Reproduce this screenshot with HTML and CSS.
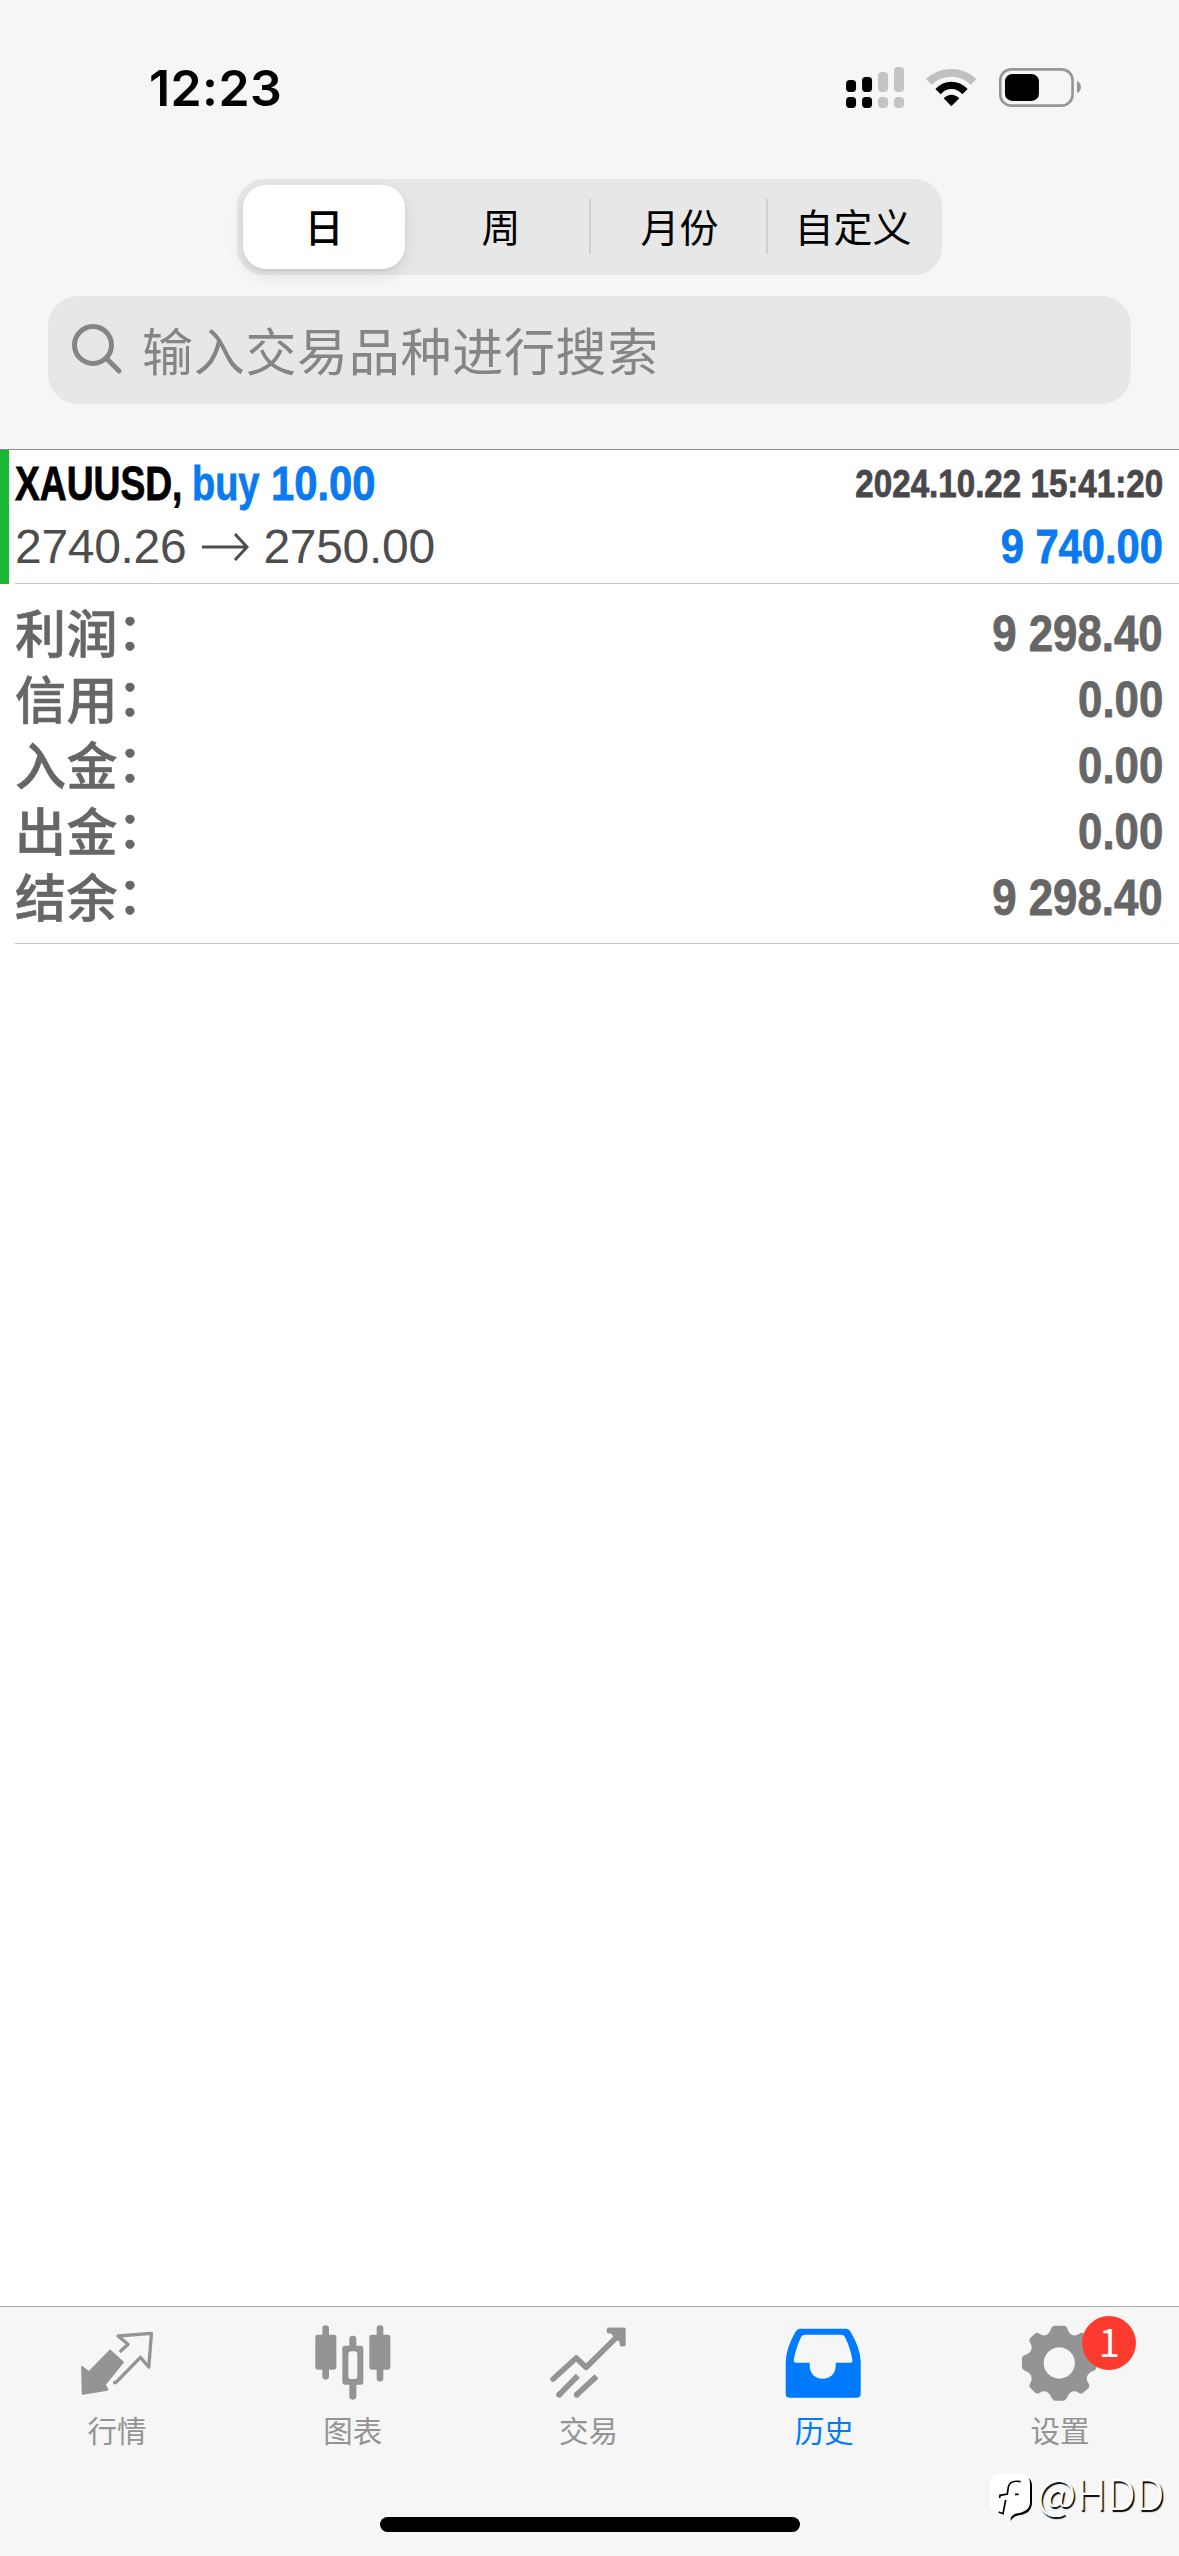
FILE: index.html
```html
<!DOCTYPE html>
<html lang="zh-CN">
<head>
<meta charset="utf-8">
<title>历史</title>
<link rel="stylesheet" href="styles.css">
</head>
<body>
<div class="app">
  <header class="header">
    <div class="status">
      <span class="clock">12:23</span>
      <svg class="status-icons" viewBox="60 60 760 160" aria-hidden="true">
        <g fill="#000"><rect x="78" y="120" width="30" height="36" rx="11"/><rect x="126" y="111" width="30" height="45" rx="11"/><rect x="78" y="171" width="30" height="33" rx="11"/><rect x="126" y="171" width="30" height="33" rx="11"/></g>
        <g fill="#c4c4c4"><rect x="174" y="96" width="30" height="60" rx="11"/><rect x="222" y="81" width="30" height="75" rx="11"/><rect x="174" y="171" width="30" height="33" rx="11"/><rect x="222" y="171" width="30" height="33" rx="11"/></g>
        <path fill="#c0c0c0" d="M318 117Q350 87 394 87Q438 87 469 117L453 134Q427 110 394 110Q361 110 335 134Z"/>
        <path d="M346 147Q367 125 394 125Q422 125 443 147L427 163Q413 147 394 147Q376 147 362 163Z"/>
        <path d="M371 175Q382 164 394 164Q407 164 418 175L394 199Z"/>
        <rect x="541" y="88" width="217" height="109" rx="33" fill="none" stroke="#969696" stroke-width="8"/>
        <rect x="555" y="102" width="102" height="81" rx="22"/>
        <path fill="#969696" d="M771 123Q783 129 783 141Q783 154 771 160Z"/>
      </svg>
    </div>
    <div class="segments">
      <span class="segment selected">日</span>
      <span class="segment">周</span>
      <span class="segment divided">月份</span>
      <span class="segment divided">自定义</span>
    </div>
    <div class="search">
      <svg class="search-icon" viewBox="0 0 52 52" aria-hidden="true"><circle cx="21" cy="21" r="18.5"/><path d="M34.5 34.5L47 47"/></svg>
      <span>输入交易品种进行搜索</span>
    </div>
  </header>
  <main class="content">
    <section class="deal">
      <div class="deal-row">
        <div class="deal-title"><span class="condensed symbol">XAUUSD,</span><span class="condensed side blue">buy</span><span class="condensed volume blue">10.00</span></div>
        <span class="condensed right deal-time">2024.10.22 15:41:20</span>
      </div>
      <div class="deal-row">
        <span class="price">2740.26<svg class="arrow" viewBox="0 0 48 30" aria-hidden="true"><path d="M1 15H45M34 2L46 15L34 28"/></svg>2750.00</span>
        <span class="condensed right deal-profit blue">9 740.00</span>
      </div>
    </section>
    <section class="summary">
      <div class="sum-row"><span>利润<i class="colon">：</i></span><span class="condensed right amount">9 298.40</span></div>
      <div class="sum-row"><span>信用<i class="colon">：</i></span><span class="condensed right amount">0.00</span></div>
      <div class="sum-row"><span>入金<i class="colon">：</i></span><span class="condensed right amount">0.00</span></div>
      <div class="sum-row"><span>出金<i class="colon">：</i></span><span class="condensed right amount">0.00</span></div>
      <div class="sum-row"><span>结余<i class="colon">：</i></span><span class="condensed right amount">9 298.40</span></div>
    </section>
  </main>
  <nav class="tabs">
    <div class="tab">
      <svg class="tab-icon" viewBox="113.7 100 240 240" aria-hidden="true">
        <path fill="currentColor" stroke="currentColor" stroke-width="6" stroke-linejoin="round" d="M210 183L248 218L194 285L202 300L128 312L126 232L146 248Z"/>
        <path fill="none" stroke="currentColor" stroke-width="10" stroke-linejoin="round" d="M239 187L264 164L234 139L334 131L326 232L301 203L227 279H219"/>
      </svg>
      <span>行情</span>
    </div>
    <div class="tab">
      <svg class="tab-icon" viewBox="821 100 240 240" aria-hidden="true">
        <g fill="currentColor"><rect x="846" y="107" width="20" height="163" rx="10"/><rect x="825" y="135" width="63" height="105" rx="7"/><rect x="1009" y="107" width="20" height="169" rx="10"/><rect x="987" y="135" width="63" height="105" rx="7"/><rect x="927" y="138" width="21" height="40" rx="10"/><rect x="927" y="275" width="21" height="55" rx="10"/><path fill-rule="evenodd" d="M913 168H962Q969 168 969 175V278Q969 285 962 285H913Q906 285 906 278V175Q906 168 913 168ZM933 185Q924 185 924 195V258Q924 268 933 268H942Q951 268 951 258V195Q951 185 942 185Z"/></g>
      </svg>
      <span>图表</span>
    </div>
    <div class="tab">
      <svg class="tab-icon" viewBox="148.5 100 240 240" aria-hidden="true">
        <g fill="none" stroke="currentColor" stroke-width="17" stroke-linejoin="round"><path stroke-linecap="round" d="M161 268L230 205L260 233L368 126M330 123H369V162"/><path d="M235 258L179 315M291 260L232 315"/></g>
        <g fill="currentColor"><path d="M322 114H378V170L345 145Z"/><circle cx="179" cy="315" r="9"/><circle cx="232" cy="315" r="9"/></g>
      </svg>
      <span>交易</span>
    </div>
    <div class="tab active">
      <svg class="tab-icon" viewBox="855.9 100 240 240" aria-hidden="true">
        <path fill="currentColor" fill-rule="evenodd" d="M902 117H1038Q1048 117 1053 127Q1083 178 1083 218V312Q1083 324 1071 324H870Q858 324 858 312V218Q858 178 887 127Q893 117 902 117ZM916 135Q907 135 903 144Q887 180 882 211Q882 219 888 219H930V228C930 253 948 267 969 267S1008 253 1008 228V219H1053Q1059 219 1058 211Q1054 181 1037 144Q1033 135 1024 135Z"/>
      </svg>
      <span>历史</span>
    </div>
    <div class="tab">
      <svg class="tab-icon" viewBox="183.3 100 240 240" aria-hidden="true">
        <path fill="currentColor" fill-rule="evenodd" d="M283 108H313Q319 108 322 116Q327 132 337 136Q347 140 358 132Q367 127 373 132L385 145Q391 151 385 160Q378 171 382 181Q386 191 401 196Q410 200 410 207V233Q410 240 401 243Q386 248 382 259Q378 270 386 281Q391 289 386 295L370 309Q364 314 356 309Q345 302 335 306Q327 310 321 324Q317 333 311 333H285Q279 333 275 324Q269 310 261 306Q251 302 240 309Q232 314 226 309L211 294Q206 289 211 281Q218 270 214 259Q210 248 195 243Q186 240 186 233V207Q186 200 195 196Q210 191 214 181Q218 171 211 160Q206 151 211 145L225 132Q231 127 238 132Q249 140 259 136Q269 132 274 116Q277 108 283 108ZM298 173a47 47 0 1 0 0.1 0Z"/>
      </svg>
      <span>设置</span>
      <b class="badge">1</b>
    </div>
  </nav>
  <div class="home-area"><div class="home-bar"></div></div>
  <div class="watermark">
    <svg class="mark" viewBox="88 540 132 150" aria-hidden="true">
      <path fill="#000" d="M202 556Q217 562 217 582V630Q217 665 178 670Q160 673 153 687V660Z"/>
      <path fill="#fff" d="M119 545H184Q211 548 211 575V630Q211 658 174 664Q160 666 152 678L150 660L126 669L92 650V575Q92 547 119 545Z"/>
      <path fill="none" stroke="#000" stroke-width="5" d="M183 569Q151 563 146 585L143 606L121 610L120 618M138 624L130 665L117 660M166 607H177"/>
    </svg>
    <span>@HDD</span>
  </div>
</div>
</body>
</html>
```
FILE: styles.css
```css
* { box-sizing: border-box; }
body { margin: 0; background: #fff; font-family: "Liberation Sans", "Noto Sans CJK SC", sans-serif; }
.app { position: relative; width: 1179px; height: 2556px; display: flex; flex-direction: column; background: #fff; overflow: hidden; }
.header { height: 450px; background: #f6f6f6; border-bottom: 1px solid #8c8c8e; display: flex; flex-direction: column; }
.status { height: 179px; padding: 59px 85.5px 0 149px; display: flex; justify-content: space-between; align-items: flex-start; }
.clock { font: 600 50px/58px Inter, sans-serif; letter-spacing: .4px; }
.status-icons { width: 253.3px; height: 53.3px; margin-top: 1px; }
.segments { width: 705px; height: 96px; margin-left: 237px; padding: 6px; border-radius: 27px; background: #e7e7e7; display: grid; grid-template-columns: 162px 184px 177px 170px; }
.segment { display: flex; align-items: center; justify-content: center; padding: 0 0 4px 4px; font: 400 39px/50px "Noto Sans CJK SC", sans-serif; }
.segment:nth-child(2) { padding-left: 8px; }
.segment.selected { padding-left: 0; background: #fff; border-radius: 23px; font-weight: 500; box-shadow: 0 6px 16px rgba(0, 0, 0, .1), 0 2px 3px rgba(0, 0, 0, .05); }
.segment.divided { background: linear-gradient(#cfcfcf, #cfcfcf) 0 14px / 2px 55px no-repeat; }
.search { width: 1083px; height: 108px; margin: 21px 0 0 48px; padding: 0 24px; border-radius: 30px; background: #e7e7e8; display: flex; align-items: center; gap: 18px; color: #858587; font: 400 51px/70px "Noto Sans CJK SC", sans-serif; letter-spacing: .7px; }
.search span { padding-bottom: 3px; }
.search-icon { width: 52px; height: 52px; fill: none; stroke: #858587; stroke-width: 5; stroke-linecap: round; }
.content { flex: 1; }
.deal { height: 134px; border-left: 9px solid #18b835; padding: 2px 16px 0 6px; background: linear-gradient(#c6c6c8, #c6c6c8) 6px bottom / 100% 1px no-repeat; }
.deal-row { display: flex; justify-content: space-between; height: 63px; align-items: center; }
/* Narrow bold face, made by squeezing the regular-width one */
.condensed { display: inline-block; font-family: "Liberation Sans", sans-serif; font-weight: 700; white-space: pre; transform: scaleX(.85); transform-origin: 0 50%; -webkit-text-stroke: .8px currentColor; }
.condensed.right { transform-origin: 100% 50%; }
.blue { color: #097aef; }
.deal-title { font-size: 48px; display: grid; grid-template-columns: 177px 79px 140px; }
.symbol { transform: scaleX(.775); }
.side { transform: scaleX(.79); }
.volume { transform: scaleX(.87); }
.deal-time { font-size: 39px; color: #48484a; }
.deal-profit { font-size: 48px; transform: scaleX(.868); }
.price { font-size: 48px; color: #4d4d4d; display: flex; align-items: center; letter-spacing: -.3px; }
.arrow { width: 48px; height: 30px; margin: 0 14px 0 15px; fill: none; stroke: #4d4d4d; stroke-width: 3; }
.summary { margin-left: 15px; height: 360px; padding: 17px 16px 0 0; border-bottom: 1px solid #c6c6c8; color: #666; }
.sum-row { height: 66px; display: flex; align-items: center; justify-content: space-between; font: 500 51px/60px "Noto Sans CJK SC", sans-serif; letter-spacing: .6px; }
.sum-row > span:first-child { padding-bottom: 6px; -webkit-text-stroke: .6px currentColor; }
.colon { display: inline-block; font-style: normal; transform: translate(-1px, -3px); }
.amount { font-size: 50px; letter-spacing: 0; transform: scaleX(.876); }
.tabs { height: 175px; padding-top: 16px; background: #f6f6f6; border-top: 1px solid #aaaaac; display: grid; grid-template-columns: repeat(5, 1fr); }
.tab { position: relative; display: flex; flex-direction: column; align-items: center; color: #949494; font: 400 29.5px/44px "Noto Sans CJK SC", sans-serif; }
.tab span { margin-left: -2px; }
.tab.active { color: #007aff; }
.tab-icon { width: 80px; height: 80px; margin-bottom: 4px; }
.badge { position: absolute; left: 139px; top: -7px; width: 54px; height: 54px; border-radius: 50%; background: #ff3b30; color: #fff; font: 400 38px/50px "Noto Sans CJK SC", sans-serif; text-align: center; }
.home-area { height: 75px; background: #f6f6f6; display: flex; justify-content: center; padding-top: 36px; }
.home-bar { width: 420px; height: 15px; border-radius: 8px; background: #000; }
.watermark { position: absolute; left: 989px; top: 2464px; display: flex; align-items: center; color: #fff; font: 300 43px/54px "Noto Sans CJK SC", sans-serif; text-shadow: 1.5px 1.5px 1px #000; }
.watermark span { padding-bottom: 11px; }
.mark { width: 44px; height: 50px; margin-right: 4px; }
```
